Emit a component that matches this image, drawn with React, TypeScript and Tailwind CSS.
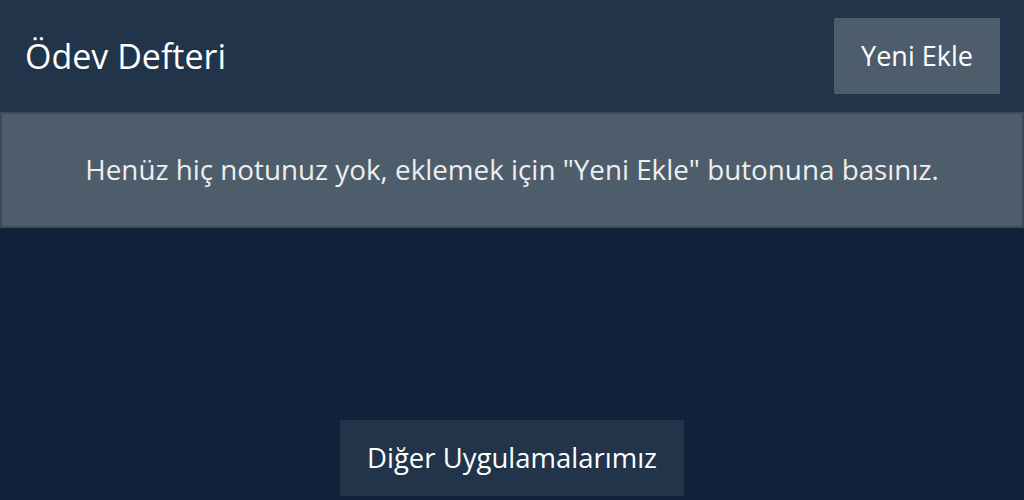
export default function App() {
  return (
    <div className="w-[1024px] h-[500px] bg-[#10233a] flex flex-col overflow-hidden" style={{ fontFamily: '"Open Sans", "Noto Sans", sans-serif' }}>
      <header className="h-[112px] bg-[#213449] flex items-center justify-between pl-[25px] pr-[24px] shrink-0">
        <h1 className="text-[34px] text-white font-normal">Ödev Defteri</h1>
        <button className="w-[166px] h-[76px] bg-[#4e5d6c] text-white text-[27px]">Yeni Ekle</button>
      </header>
      <div className="h-[116px] bg-[#4e5d6c] border-2 border-[#3d4a58] flex items-center justify-center shrink-0">
        <p className="text-[#eeeeee] text-[27.8px]">Henüz hiç notunuz yok, eklemek için "Yeni Ekle" butonuna basınız.</p>
      </div>
      <div className="flex-1 flex items-end justify-center pb-[4px]">
        <button className="w-[344px] h-[76px] bg-[#213449] text-white text-[27.5px]">Diğer Uygulamalarımız</button>
      </div>
    </div>
  );
}
